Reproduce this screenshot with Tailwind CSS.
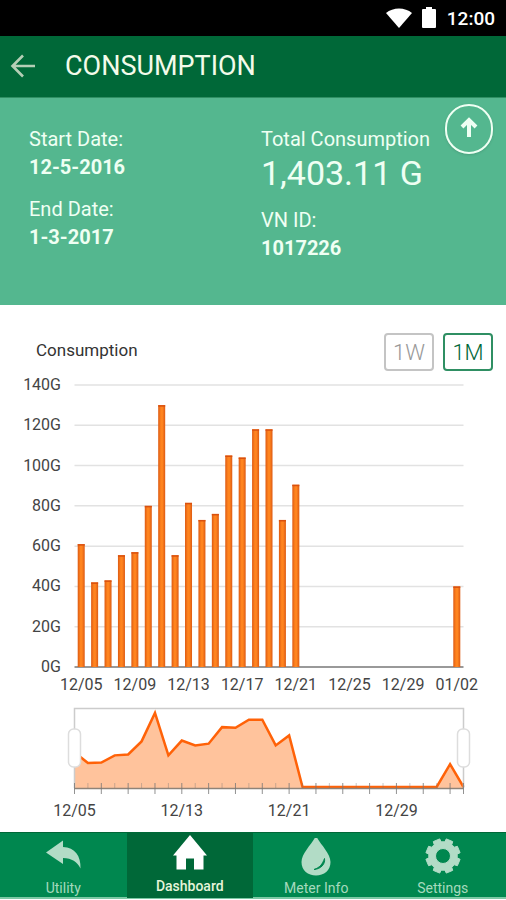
<!DOCTYPE html>
<html lang="en">
<head>
    <meta charset="UTF-8">
    <meta name="viewport" content="width=device-width, initial-scale=1.0">
    <title>Consumption</title>
    <script src="https://cdn.jsdelivr.net/npm/@tailwindcss/browser@4"></script>
</head>
<body class="min-h-screen flex flex-col bg-white font-[Roboto,sans-serif]">
    <!-- Status bar -->
    <div class="h-9 bg-black text-white flex items-center justify-end gap-2 pr-[11px]">
        <svg class="w-7 h-6" viewBox="0 0 28 24" fill="currentColor" aria-hidden="true"><path d="M1 7C8 1 20 1 27 7L14 22Z"/></svg>
        <svg class="w-4 h-6" viewBox="0 0 16 24" fill="currentColor" aria-hidden="true"><path d="M5 1h6v2h3q1 0 1 1v17q0 1-1 1H2q-1 0-1-1V4q0-1 1-1h3z"/></svg>
        <span class="text-[19px] font-medium leading-6 pl-[2px] pt-[2px]">12:00</span>
    </div>

    <header class="h-[61px] bg-[#006838] flex items-center gap-7 pl-[9px] pb-[2px]">
        <button aria-label="Back" class="text-[#b5cfb6]">
            <svg class="w-7 h-7" viewBox="0 0 28 28" fill="none" stroke="currentColor" stroke-width="2.6"><path d="M26 14H4M14 3.500L3.500 14L14 24.500"/></svg>
        </button>
        <h1 class="text-[27px] leading-8 text-[#f3fbea]">CONSUMPTION</h1>
    </header>

    <!-- Summary -->
    <section class="relative h-[208px] bg-[#54b78f] border-t border-[#2f8f63] text-[#effff3] text-xl leading-7 grid grid-cols-[232px_1fr] pl-[29px] pt-[27px]">
        <dl>
            <dt>Start Date:</dt>
            <dd class="font-bold">12-5-2016</dd>
            <dt class="mt-[14px]">End Date:</dt>
            <dd class="font-bold">1-3-2017</dd>
        </dl>
        <dl>
            <dt>Total Consumption</dt>
            <dd class="text-[34px] leading-10">1,403.11 G</dd>
            <dt class="mt-[13px]">VN ID:</dt>
            <dd class="font-bold">1017226</dd>
        </dl>
        <button aria-label="Share" class="absolute top-[6px] right-[13px] w-12 h-[50px] rounded-full border-2 border-[#effff3] shadow-sm flex items-center justify-center pb-1">
            <svg class="w-5 h-6" viewBox="0 0 20 24" fill="none" stroke="currentColor" stroke-width="4"><path d="M10 22V5M3 12L10 5L17 12"/></svg>
        </button>
    </section>

    <!-- Chart -->
    <main class="flex-1 pt-7">
        <div class="flex items-center justify-between pl-9 pr-[13px]">
            <h2 class="text-[17px] leading-6 pb-1 text-[#333]">Consumption</h2>
            <div class="flex gap-[9px]">
                <button class="w-[50px] h-[38px] border-2 border-[#c4c4c4] rounded-sm text-[22px] font-light text-[#999]">1W</button>
                <button class="w-[50px] h-[38px] border-2 border-[#2f8f63] rounded-sm text-[22px] font-light text-[#006838]">1M</button>
            </div>
        </div>
        <svg id="chart" class="w-full block" viewBox="0 371 506 461" role="img" aria-label="Daily consumption in gallons"></svg>
    </main>

    <nav class="h-[67px] mb-[1px] bg-[#00874f] border-t border-b-2 border-t-[#006838] border-b-[#7cc9a5] grid grid-cols-4 text-sm leading-5 text-[#a5dabd]">
        <a href="#" class="flex flex-col items-center pt-[5px]">
            <svg class="w-10 h-10" viewBox="0 0 40 40" fill="#b2dcc6" aria-hidden="true"><path d="M3 14.500L20 2.500V9C32 9.500 38 18 37.500 30.500C34 23.500 29 20.500 20 20V26Z"/></svg>
            Utility
        </a>
        <a href="#" aria-current="page" class="flex flex-col items-center pt-[1px] bg-[#006838] text-[#e6f5da] font-medium">
            <svg class="w-10 h-[42px]" viewBox="0 0 40 42" fill="#fff" aria-hidden="true"><path d="M20 1L37 21.500H33.500V35.500H24V24.500H16V35.500H6.500V21.500H3Z"/></svg>
            Dashboard
        </a>
        <a href="#" class="flex flex-col items-center pt-[5px]">
            <svg class="w-10 h-10" viewBox="0 6 40 40" fill="#b2dcc6" aria-hidden="true"><path d="M20 3.500C23 11 34.500 21 34.500 30C34.500 38.500 28 43.500 20 43.500C12 43.500 5.500 38.500 5.500 30C5.500 21 17 11 20 3.500Z"/><path d="M28.500 26.500C29.500 32 25 37 18 37.500C24 35.500 26.500 32 28.500 26.500Z" fill="#00874f" stroke="#00874f"/></svg>
            Meter Info
        </a>
        <a href="#" class="flex flex-col items-center pt-[5px]">
            <svg class="w-10 h-10" viewBox="0 0 40 40" fill="#b2dcc6" stroke="#b2dcc6" stroke-linejoin="round" aria-hidden="true"><path id="gear" fill-rule="evenodd"/></svg>
            Settings
        </a>
    </nav>

    <script>
        // 12/05 to 01/02, one value per day
        const values = [61, 42, 43, 55.5, 57, 80, 130, 55.5, 81.5, 73, 76, 105, 104, 118, 118, 73, 90.5,
            0, 0, 0, 0, 0, 0, 0, 0, 0, 0, 0, 40];
        const labels = ['12/05', '12/09', '12/13', '12/17', '12/21', '12/25', '12/29', '01/02'];
        const left = 74.5;
        const right = 463.5;
        const step = (right - left) / values.length;
        const y = (v) => 667 - v * 282 / 140;
        const navY = (v) => 787 - v * 0.57;
        let out = '';

        out += '<defs><linearGradient id="bar"><stop offset="0" stop-color="#dd5a12"/><stop offset="0.4" stop-color="#ff841f"/><stop offset="0.6" stop-color="#ff841f"/><stop offset="1" stop-color="#dd5a12"/></linearGradient></defs>';

        // grid and y axis
        for (let v = 0; v <= 140; v += 20) {
            out += `<line x1="${left}" x2="${right}" y1="${y(v)}" y2="${y(v)}" stroke="${v ? '#e2e2e2' : '#777'}" stroke-width="1.5"/>`;
            out += `<text x="61" y="${y(v) + 5}" text-anchor="end">${v}G</text>`;
        }

        values.forEach((v, i) => {
            if (!v) return;
            const x = left + step * (i + 0.5) - 3.5;
            out += `<rect x="${x}" y="${y(v)}" width="7" height="${667 - y(v)}" fill="url(#bar)"/>`;
            out += `<rect x="${x}" y="${y(v)}" width="7" height="1.5" fill="#d9500f"/>`;
        });
        labels.forEach((t, i) => {
            out += `<text x="${left + step * (i * 4 + 0.5)}" y="690" text-anchor="middle">${t}</text>`;
        });

        // range navigator
        const points = values.map((v, i) => `${left + step * i},${navY(v)}`).join(' ') + ` ${right},${navY(0)}`;
        out += `<polygon points="${left},788 ${points} ${right},788" fill="#ffc39c"/>`;
        out += `<polyline points="${points}" fill="none" stroke="#ff6208" stroke-width="2.5"/>`;
        out += `<path d="M${left} 788V708.500H${right}V788" fill="none" stroke="#ccc" stroke-width="1.500"/>`;
        out += `<line x1="${left}" x2="${right}" y1="788.500" y2="788.500" stroke="#8f8378" stroke-width="1.500"/>`;
        for (let i = 0; i <= values.length; i++) {
            const x = left + step * i;
            const major = i % 2 === 0 || i === values.length;
            out += `<line x1="${x}" x2="${x}" y1="783" y2="${major ? 794 : 788}" stroke="#777" stroke-opacity="${major ? 0.8 : 0.4}"/>`;
        }
        [0, 2, 4, 6].forEach((n) => {
            out += `<text x="${left + step * n * 4}" y="816" text-anchor="middle">${labels[n]}</text>`;
        });
        [left, right].forEach((x) => {
            out += `<rect x="${x - 6}" y="729" width="12" height="38" rx="5" fill="#fff" stroke="#ddd" stroke-width="1.5"/>`;
        });

        document.getElementById('chart').innerHTML = `<g fill="#444" font-size="16">${out}</g>`;

        // settings gear with eight teeth
        let d = '';
        for (let i = 0; i < 8; i++) {
            [[-0.27, 14.3], [-0.2, 17.4], [0.2, 17.4], [0.27, 14.3]].forEach(([a, r]) => {
                const t = (i + 0.5) * Math.PI / 4 + a;
                d += `${d ? 'L' : 'M'}${(20 + r * Math.cos(t)).toFixed(1)} ${(18 + r * Math.sin(t)).toFixed(1)}`;
            });
        }
        document.getElementById('gear').setAttribute('d', d + 'ZM27.500 18A7.500 7.500 0 1 0 12.500 18A7.500 7.500 0 1 0 27.500 18Z');
    </script>
</body>
</html>
